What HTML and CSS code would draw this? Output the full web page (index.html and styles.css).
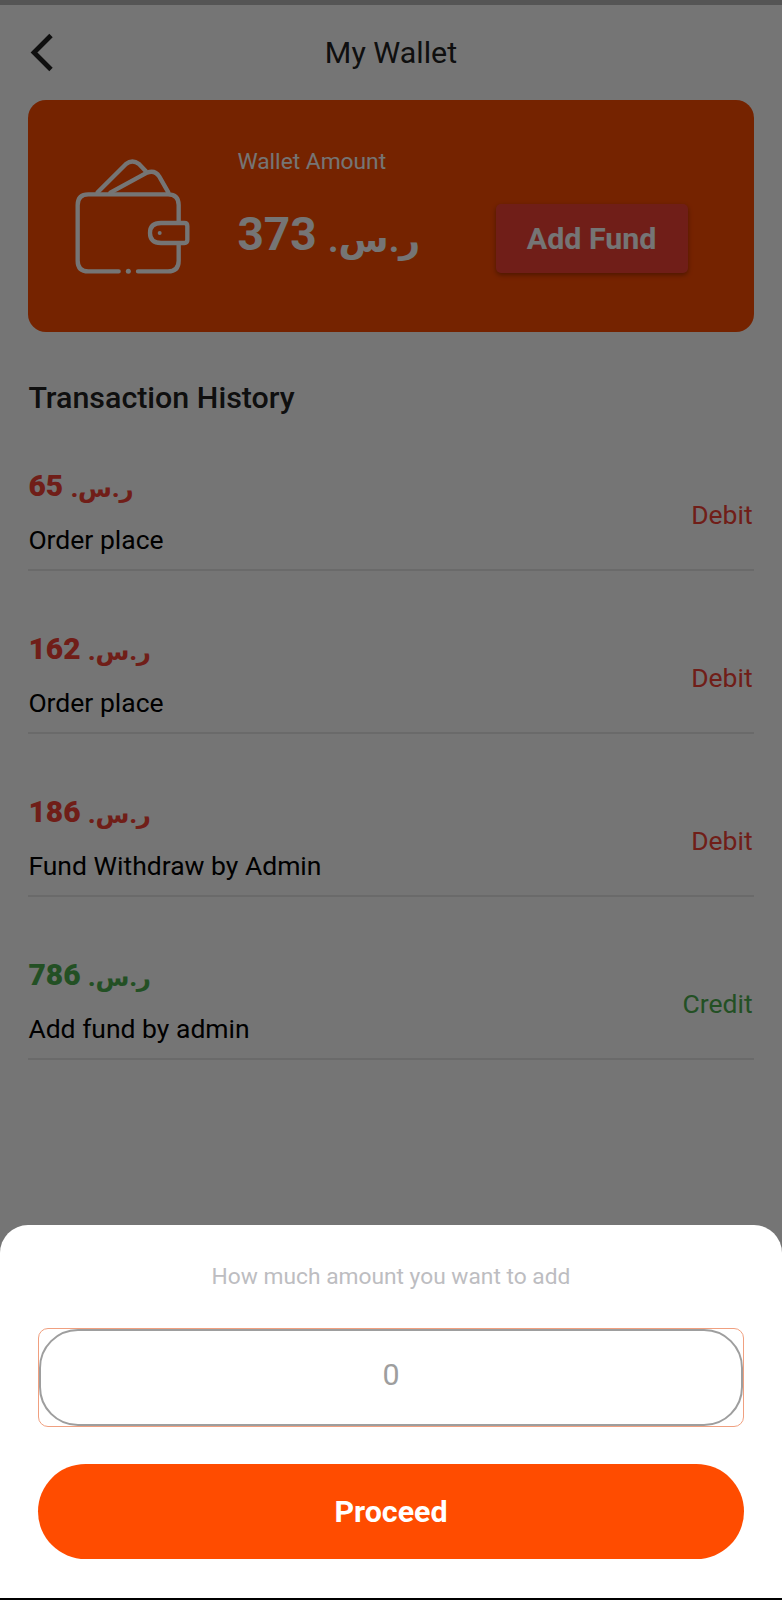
FILE: index.html
```html
<!DOCTYPE html>
<html lang="en">
<head>
    <meta charset="UTF-8">
    <meta name="viewport" content="width=device-width, initial-scale=1.0">
    <title>My Wallet</title>
    <link rel="stylesheet" href="styles.css">
</head>
<body>
    <div class="screen">
        <div class="status-strip"></div>
        <header class="app-bar">
            <svg class="back" width="24" height="40" viewBox="0 0 24 40" fill="none" stroke="#222" stroke-width="4.8">
                <path d="M21 2.5 L4 19.5 L21 36.5"/>
            </svg>
            <h1>My Wallet</h1>
        </header>

        <main class="content">
            <section class="wallet-card">
                <svg class="wallet-icon" width="116" height="119" viewBox="166 203 348 357" fill="none" stroke="#fff" stroke-width="13" stroke-linecap="round" stroke-linejoin="round">
                    <path d="M297 543H206Q174 543 174 511V344Q174 312 206 312H445Q477 312 477 344V394M477 460V511Q477 543 445 543H355"/>
                    <path d="M494 398Q503 398 503 407V449Q503 458 494 458H424Q391 458 391 428Q391 398 424 398Z"/>
                    <path d="M234 306L319 221Q338 206 358 221L378 242"/>
                    <path d="M272 307L382 247Q406 238 419 259L446 306"/>
                    <circle cx="420" cy="428" r="6" fill="#fff" stroke="none"/>
                    <circle cx="326" cy="543" r="7.5" fill="#fff" stroke="none"/>
                </svg>
                <div class="balance">
                    <p class="balance-label">Wallet Amount</p>
                    <p class="balance-value"><span class="currency">ر.س.</span> 373</p>
                </div>
                <button class="add-fund">Add Fund</button>
            </section>

            <h2>Transaction History</h2>

            <ul class="transactions">
                <li class="debit">
                    <div>
                        <p class="amount"><span class="currency">ر.س.</span> 65</p>
                        <p class="note">Order place</p>
                    </div>
                    <span class="type">Debit</span>
                </li>
                <li class="debit">
                    <div>
                        <p class="amount"><span class="currency">ر.س.</span> 162</p>
                        <p class="note">Order place</p>
                    </div>
                    <span class="type">Debit</span>
                </li>
                <li class="debit">
                    <div>
                        <p class="amount"><span class="currency">ر.س.</span> 186</p>
                        <p class="note">Fund Withdraw by Admin</p>
                    </div>
                    <span class="type">Debit</span>
                </li>
                <li class="credit">
                    <div>
                        <p class="amount"><span class="currency">ر.س.</span> 786</p>
                        <p class="note">Add fund by admin</p>
                    </div>
                    <span class="type">Credit</span>
                </li>
            </ul>
        </main>

        <div class="scrim">
            <form class="sheet">
                <p class="sheet-title">How much amount you want to add</p>
                <div class="field">
                    <input type="text" placeholder="0">
                </div>
                <button type="button" class="proceed">Proceed</button>
            </form>
            <div class="nav-strip"></div>
        </div>
    </div>
</body>
</html>
```
FILE: styles.css
```css
* {
    box-sizing: border-box;
}
body {
    margin: 0;
    font-family: Roboto, 'DejaVu Sans', sans-serif;
    background-color: #fff;
}
h1, h2, p, ul {
    margin: 0;
    padding: 0;
}
button, input {
    font-family: inherit;
}
.screen {
    position: relative;
    width: 782px;
    height: 1600px;
    overflow: hidden;
}
.status-strip {
    height: 5px;
    background: #b9b9b9;
}
.app-bar {
    display: grid;
    grid-template-columns: 24px 1fr 24px;
    align-items: center;
    height: 95px;
    padding: 0 30px;
}
.app-bar h1 {
    font-size: 30.4px;
    font-weight: 400;
    line-height: 95px;
    text-align: center;
    color: #222;
}
.content {
    padding: 0 28.4px;
}
.wallet-card {
    display: flex;
    align-items: flex-start;
    height: 232px;
    padding: 48px 66px 0 47px;
    border-radius: 18px;
    background: #ff4c00;
    color: #fff;
}
.wallet-icon {
    flex: none;
    margin-top: 10px;
}
.balance {
    flex: 1;
    margin-left: 46px;
}
.balance-label {
    font-size: 22.75px;
    line-height: 27px;
    white-space: nowrap;
}
.balance-value {
    margin-top: 29px;
    font-size: 46px;
    font-weight: 700;
    line-height: 60px;
    white-space: nowrap;
}
.currency {
    font-size: 0.79em;
    line-height: 1;
    vertical-align: -0.06em;
}
.add-fund {
    width: 192px;
    height: 69px;
    margin-top: 56px;
    padding: 0 0 1px;
    border: none;
    border-radius: 5px;
    background: #f44336;
    box-shadow: 0 2px 5px rgba(0, 0, 0, 0.35);
    color: #fff;
    font-size: 30.4px;
    font-weight: 700;
}
h2 {
    margin-top: 46px;
    font-size: 30.4px;
    font-weight: 500;
    line-height: 40px;
    color: #222;
}
.transactions {
    margin-top: 26px;
    list-style: none;
}
.transactions li {
    display: flex;
    justify-content: space-between;
    align-items: center;
    height: 127px;
    margin-bottom: 36px;
    border-bottom: 2px solid #e8e8e8;
}
.amount {
    margin-top: 12px;
    font-size: 30px;
    font-weight: 900;
    line-height: 36px;
}
.amount .currency {
    font-size: 0.82em;
    vertical-align: -0.03em;
}
.note {
    margin-top: 19px;
    font-size: 26.5px;
    line-height: 34px;
    color: #000;
}
.type {
    margin: 16px 1px 0 0;
    font-size: 26.5px;
    line-height: 34px;
}
.debit {
    color: #f44336;
}
.credit {
    color: #4caf50;
}
/* dimmed backdrop holding the bottom sheet */
.scrim {
    position: absolute;
    inset: 0;
    display: flex;
    flex-direction: column;
    justify-content: flex-end;
    background: rgba(0, 0, 0, 0.54);
}
.sheet {
    height: 373px;
    padding: 38px 38px 0;
    border-radius: 28px 28px 0 0;
    background: #fff;
}
.sheet-title {
    font-size: 22.75px;
    line-height: 28px;
    text-align: center;
    color: #bdbdc1;
}
.field {
    height: 99px;
    margin-top: 37px;
    border: 1px solid #f0a080;
    border-radius: 10px;
}
.field input {
    display: block;
    width: 100%;
    height: 97px;
    padding: 0 0 6px;
    border: 2px solid #9e9e9e;
    border-radius: 39px;
    background: transparent;
    font-size: 30.4px;
    text-align: center;
    outline: none;
}
.field input::placeholder {
    color: #9e9e9e;
}
.proceed {
    display: block;
    width: 100%;
    height: 95px;
    margin-top: 37px;
    padding: 0;
    border: none;
    border-radius: 48px;
    background: #ff4c00;
    color: #fff;
    font-size: 30.4px;
    font-weight: 700;
}
.nav-strip {
    height: 2px;
    background: #000;
}
```
